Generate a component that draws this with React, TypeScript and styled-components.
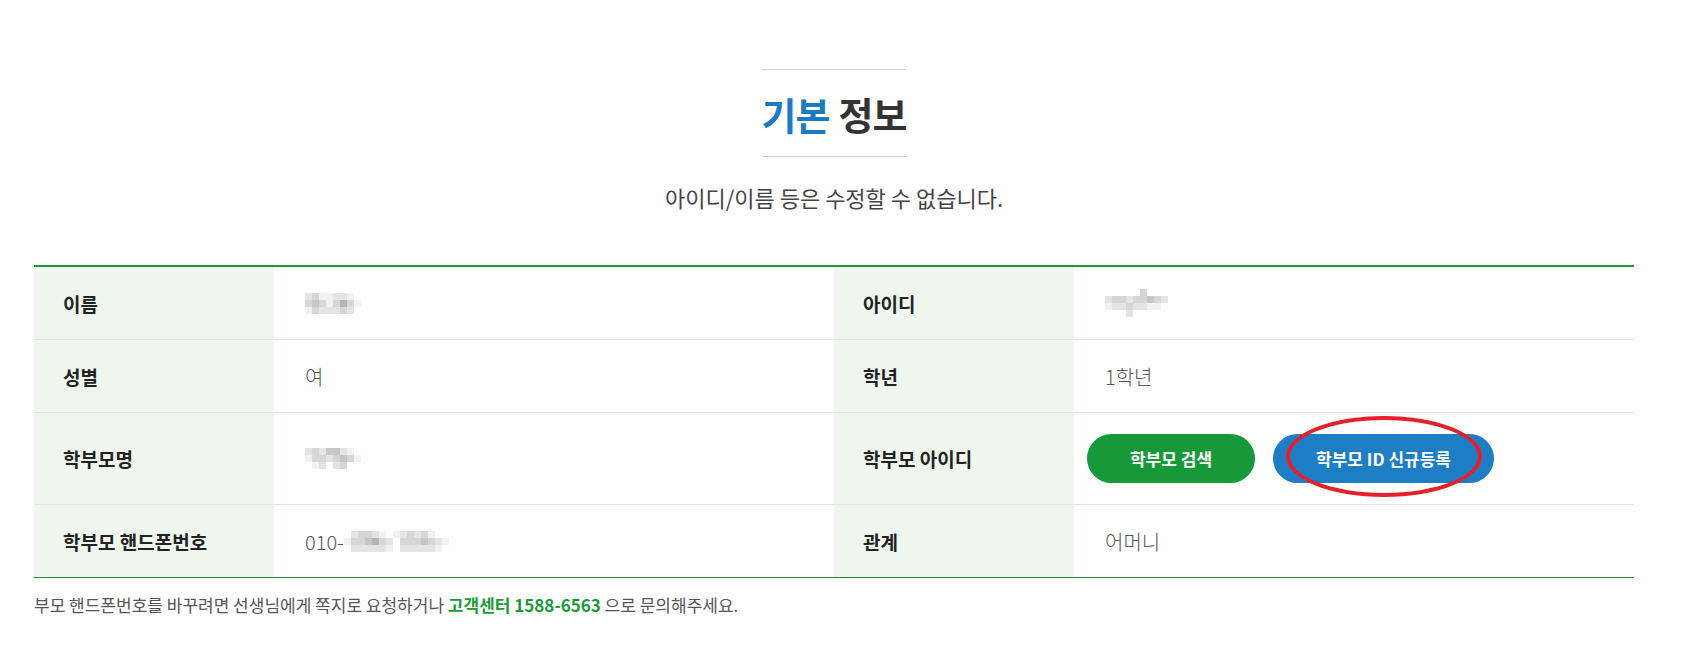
import React from "react";
import styled, { createGlobalStyle } from "styled-components";

const GlobalStyle = createGlobalStyle`
  html, body { margin: 0; padding: 0; background: #ffffff; }
  body {
    font-family: "Noto Sans CJK KR", "Noto Sans", sans-serif;
    color: #333;
  }
  * { box-sizing: border-box; }
`;

const Page = styled.div`
  width: 1600px;
  margin-left: 34px;
  padding-top: 69px;
`;

const Heading = styled.div`
  display: flex;
  flex-direction: column;
  align-items: center;
`;

const Title = styled.h2`
  margin: 0;
  height: 88px;
  display: flex;
  align-items: center;
  border-top: 1px solid #cfcfcf;
  border-bottom: 1px solid #cfcfcf;
  font-size: 38px;
  font-weight: 700;
  letter-spacing: -1px;
  color: #333;
`;

const Accent = styled.span`
  color: #1b7bc4;
  margin-right: 9px;
`;

const Subtitle = styled.p`
  margin: 25px 0 0;
  font-size: 22px;
  line-height: 30px;
  color: #444;
  font-weight: 400;
`;

const Table = styled.div`
  margin-top: 53px;
  border-top: 2px solid #1b9a3b;
  border-bottom: 1px solid #2b8a3e;
`;

const Row = styled.div<{ $tall?: boolean }>`
  box-sizing: content-box;
  display: grid;
  grid-template-columns: 240px 560px 240px 560px;
  min-height: ${(p) => (p.$tall ? "91px" : "72px")};
  border-bottom: 1px solid #e3e3e3;
  &:last-child { border-bottom: none; }
`;

const Th = styled.div`
  display: flex;
  align-items: center;
  padding: 0 29px;
  background: #eff6ee;
  font-size: 19px;
  font-weight: 700;
  color: #222;
`;

const Td = styled.div<{ $compact?: boolean }>`
  display: flex;
  align-items: center;
  gap: ${(p) => (p.$compact ? "18px" : "0")};
  padding: 0 ${(p) => (p.$compact ? "13px" : "31px")};
  font-size: 20px;
  font-weight: 300;
  color: #555;
`;

const PillButton = styled.button<{ $tone: "green" | "blue"; $w: number }>`
  height: 49px;
  width: ${(p) => p.$w}px;
  border: none;
  border-radius: 25px;
  background: ${(p) => (p.$tone === "green" ? "#17993a" : "#1e7ec5")};
  color: #fff;
  font-family: "Noto Sans CJK KR", "Noto Sans", sans-serif;
  font-size: 17px;
  font-weight: 700;
  letter-spacing: 0;
  cursor: pointer;
`;

const Marked = styled.span`
  position: relative;
  display: inline-flex;
`;

const Ellipse = styled.span`
  position: absolute;
  left: 13px;
  top: -18px;
  width: 196px;
  height: 81px;
  border: 4px solid #e6202a;
  border-radius: 50%;
  pointer-events: none;
`;

const Note = styled.p`
  margin: 15px 0 0;
  font-size: 17px;
  line-height: 24px;
  color: #555;
`;

const Strong = styled.strong`
  color: #1a9a3a;
  font-weight: 700;
`;

type MosaicProps = { cells: number[][]; size?: number };

const shades = ["#ffffff", "#f1f1f1", "#e4e4e4", "#d6d6d6", "#c6c6c6", "#b4b4b4"];

function Mosaic({ cells, size = 7 }: MosaicProps) {
  const rows = cells.length;
  const cols = cells[0].length;
  return (
    <svg width={cols * size} height={rows * size} viewBox={`0 0 ${cols * size} ${rows * size}`}>
      {cells.map((r, y) =>
        r.map((v, x) => (
          <rect key={`${x}-${y}`} x={x * size} y={y * size} width={size} height={size} fill={shades[v]} />
        ))
      )}
    </svg>
  );
}

const nameCells = [
  [2, 3, 1, 1, 2, 2, 1, 0],
  [3, 4, 3, 1, 3, 5, 3, 1],
  [1, 3, 2, 2, 2, 3, 2, 0],
];
const idCells = [
  [0, 0, 0, 0, 0, 3, 0, 0, 0],
  [2, 3, 3, 2, 3, 3, 4, 3, 2],
  [1, 2, 2, 3, 2, 2, 1, 1, 0],
  [0, 0, 0, 2, 0, 0, 0, 0, 0],
];
const parentCells = [
  [2, 3, 2, 4, 4, 2, 1, 0],
  [1, 3, 3, 2, 3, 4, 3, 1],
  [0, 1, 2, 0, 2, 3, 0, 0],
];
const phoneCells = [
  [0, 2, 3, 3, 2, 1, 0, 1, 2, 3, 2, 3, 1, 0, 0, 0],
  [1, 3, 3, 4, 5, 3, 2, 0, 3, 3, 3, 4, 3, 2, 1, 0],
  [0, 2, 2, 2, 2, 2, 1, 0, 2, 2, 2, 2, 2, 1, 0, 0],
];

export default function App() {
  return (
    <>
      <GlobalStyle />
      <Page>
        <Heading>
          <Title>
            <Accent>기본</Accent>정보
          </Title>
          <Subtitle>아이디/이름 등은 수정할 수 없습니다.</Subtitle>
        </Heading>

        <Table>
          <Row>
            <Th>이름</Th>
            <Td>
              <Mosaic cells={nameCells} />
            </Td>
            <Th>아이디</Th>
            <Td>
              <Mosaic cells={idCells} size={7} />
            </Td>
          </Row>
          <Row>
            <Th>성별</Th>
            <Td>여</Td>
            <Th>학년</Th>
            <Td>1학년</Td>
          </Row>
          <Row $tall>
            <Th>학부모명</Th>
            <Td>
              <Mosaic cells={parentCells} />
            </Td>
            <Th>학부모 아이디</Th>
            <Td $compact>
              <PillButton $tone="green" $w={168}>학부모 검색</PillButton>
              <Marked>
                <PillButton $tone="blue" $w={221}>학부모 ID 신규등록</PillButton>
                <Ellipse />
              </Marked>
            </Td>
          </Row>
          <Row>
            <Th>학부모 핸드폰번호</Th>
            <Td>
              010-
              <Mosaic cells={phoneCells} />
            </Td>
            <Th>관계</Th>
            <Td>어머니</Td>
          </Row>
        </Table>

        <Note>
          부모 핸드폰번호를 바꾸려면 선생님에게 쪽지로 요청하거나 <Strong>고객센터 1588-6563</Strong> 으로 문의해주세요.
        </Note>
      </Page>
    </>
  );
}
